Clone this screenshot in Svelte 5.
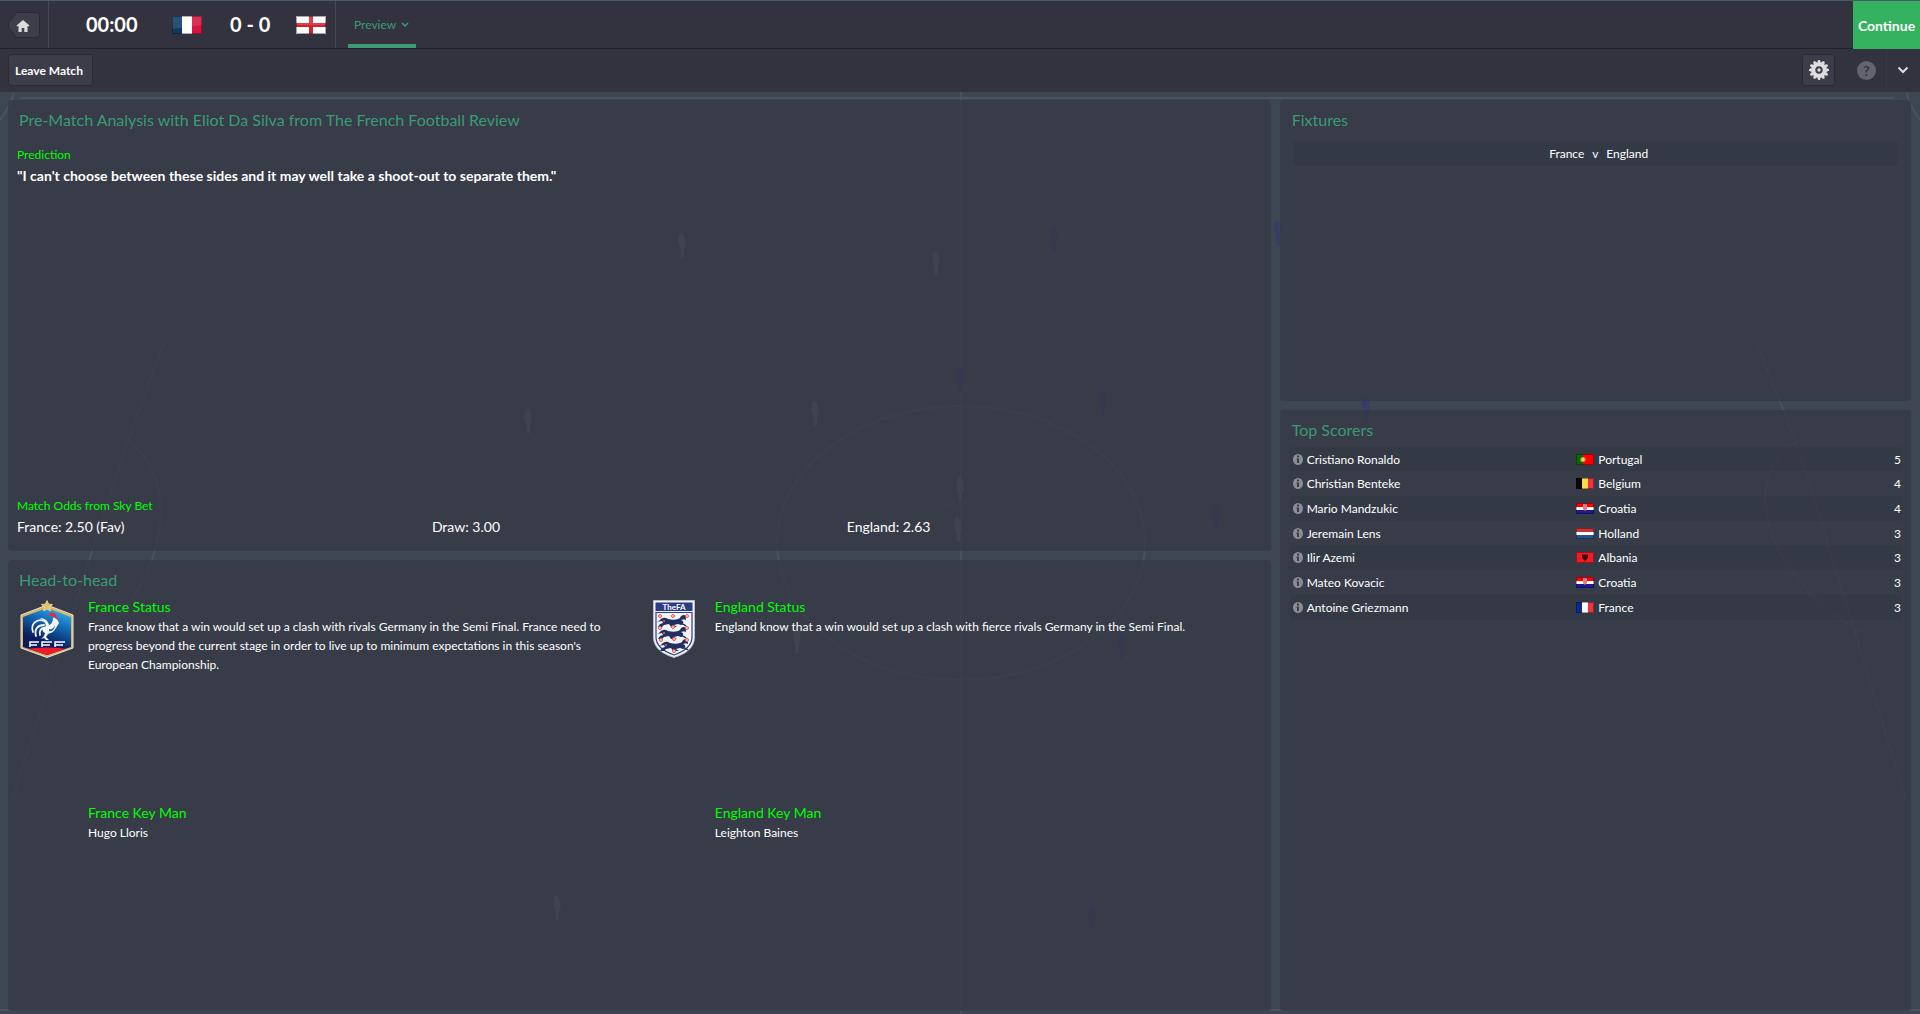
<script>
  const scorers = [
    { name: 'Cristiano Ronaldo', nation: 'Portugal', goals: 5 },
    { name: 'Christian Benteke', nation: 'Belgium', goals: 4 },
    { name: 'Mario Mandzukic', nation: 'Croatia', goals: 4 },
    { name: 'Jeremain Lens', nation: 'Holland', goals: 3 },
    { name: 'Ilir Azemi', nation: 'Albania', goals: 3 },
    { name: 'Mateo Kovacic', nation: 'Croatia', goals: 3 },
    { name: 'Antoine Griezmann', nation: 'France', goals: 3 }
  ];

  const odds = ['France: 2.50 (Fav)', 'Draw: 3.00', 'England: 2.63'];

  const teams = [
    {
      name: 'France',
      status: "France know that a win would set up a clash with rivals Germany in the Semi Final. France need to progress beyond the current stage in order to live up to minimum expectations in this season's European Championship.",
      keyMan: 'Hugo Lloris'
    },
    {
      name: 'England',
      status: 'England know that a win would set up a clash with fierce rivals Germany in the Semi Final.',
      keyMan: 'Leighton Baines'
    }
  ];

  // players standing on the pitch behind the panels
  const players = [
    { x: 682, y: 246, home: false },
    { x: 936, y: 264, home: false },
    { x: 1054, y: 240, home: true },
    { x: 1278, y: 234, home: true },
    { x: 960, y: 380, home: true },
    { x: 815, y: 414, home: false },
    { x: 1103, y: 404, home: true },
    { x: 528, y: 422, home: false },
    { x: 1366, y: 410, home: true },
    { x: 960, y: 490, home: false },
    { x: 958, y: 530, home: false },
    { x: 1216, y: 518, home: true },
    { x: 797, y: 642, home: false },
    { x: 1121, y: 648, home: true },
    { x: 557, y: 909, home: false },
    { x: 1092, y: 918, home: true }
  ];
</script>

{#snippet flag(nation)}
  <svg class="flag" viewBox="0 0 18 11" aria-hidden="true">
    {#if nation === 'Portugal'}
      <path fill="#f00" d="M0 0h18v11H0z" />
      <path fill="#066b00" d="M0 0h7v11H0z" />
      <circle cx="7" cy="5.5" r="2.6" fill="#e8a020" />
      <circle cx="7" cy="5.5" r="1.3" fill="#f6d6d0" />
    {:else if nation === 'Belgium'}
      <path fill="#080808" d="M0 0h6v11H0z" />
      <path fill="#fbdc4c" d="M6 0h6v11H6z" />
      <path fill="#ef3340" d="M12 0h6v11h-6z" />
    {:else if nation === 'Croatia'}
      <path fill="#fff" d="M0 0h18v11H0z" />
      <path fill="#f00" d="M0 0h18v4H0z" />
      <path fill="#1a1a96" d="M0 7h18v4H0z" />
      <path fill="#f27474" d="M7 2h4v4l-2 2-2-2z" />
      <path fill="#6b8fd0" d="M7 1h4v1H7z" />
    {:else if nation === 'Holland'}
      <path fill="#fff" d="M0 0h18v11H0z" />
      <path fill="#c8323c" d="M0 0h18v4H0z" />
      <path fill="#27509b" d="M0 7h18v4H0z" />
    {:else if nation === 'Albania'}
      <path fill="#ee1c25" d="M0 0h18v11H0z" />
      <path fill="#3a0808" d="M6 2l2 1 1-1 1 1 2-1v3l-1 2-2 2-2-2-1-2z" />
    {:else}
      <path fill="#fff" d="M0 0h18v11H0z" />
      <path fill="#0a2a92" d="M0 0h6v11H0z" />
      <path fill="#ef3340" d="M12 0h6v11h-6z" />
    {/if}
    <path fill="none" stroke="#000" stroke-opacity=".35" d="M.5.5h17v10H.5z" />
  </svg>
{/snippet}

<div class="screen">
  <svg class="pitch" viewBox="0 0 1920 1014" preserveAspectRatio="none" aria-hidden="true">
    <path d="M961 92V1014M20 98H1894M0 1010H1920" />
    <ellipse cx="961" cy="543" rx="184" ry="137" />
    <path d="M14 92C12 102 6 112 0 120M164 342L124 452L12 800M124 440C172 462 180 560 104 632M1907 92C1908 102 1914 112 1920 120M1756 342L1800 452L1906 800M1800 440C1748 462 1744 560 1860 632" />
    {#each players as p}
      <path class={p.home ? 'home' : 'away'} d="M{p.x} {p.y - 14}l3 5l1 8l-2 3l0 9l-3 1l-1 -10l-2 -6l1 -8z" />
    {/each}
    <text x="961" y="508">Rooney</text>
  </svg>

  <header class="topbar">
    <button class="home-btn" aria-label="Home">
      <svg viewBox="0 0 32 26" aria-hidden="true">
        <path fill="#3d3e49" stroke="#282a34" d="M8.500.5h20a3 3 0 0 1 3 3v19a3 3 0 0 1-3 3h-20L.5 15.500v-5z" />
        <path fill="#dcdcdc" d="M15 8l6.500 5.500-1 1-1-.5v6h-3.200v-4h-2.600v4H10.500v-6l-1 .5-1-1z" />
      </svg>
    </button>
    <div class="scoreboard">
      <span class="clock">00:00</span>
      <svg class="big-flag" viewBox="0 0 30 18" aria-label="France" role="img">
        <path fill="#fff" d="M0 0h30v18H0z" />
        <path fill="#0c3a63" d="M0 0h10v18H0z" />
        <path fill="#da1240" d="M20 0h10v18H20z" />
        <path fill="#fff" fill-opacity=".12" d="M0 0h30v9L0 13z" />
        <path fill="none" stroke="#000" stroke-opacity=".3" d="M.5.5h29v17H.5z" />
      </svg>
      <span class="score">0 - 0</span>
      <svg class="big-flag" viewBox="0 0 30 18" aria-label="England" role="img">
        <path fill="#fff" d="M0 0h30v18H0z" />
        <path fill="#d2202f" d="M13 0h4v7h13v4H17v7h-4v-7H0V7h13z" />
        <path fill="#fff" fill-opacity=".15" d="M0 0h30v9H0z" />
        <path fill="none" stroke="#000" stroke-opacity=".35" d="M.5.5h29v17H.5z" />
      </svg>
    </div>
    <button class="tab">
      Preview
      <svg width="8" height="6" viewBox="0 0 8 6" aria-hidden="true"><path d="M1 1l3 3 3-3" /></svg>
    </button>
    <button class="continue">Continue</button>
  </header>

  <div class="toolbar">
    <button class="tool">Leave Match</button>
    <button class="tool icon gear" aria-label="Settings">
      <svg width="20" height="20" viewBox="-10 -10 20 20" aria-hidden="true">
        {#each [0, 30, 60, 90, 120, 150] as angle}
          <path fill="#dedede" transform="rotate({angle})" d="M-1.700-8L-.8-10H.8L1.700-8V8L.8 10H-.8L-1.700 8z" />
        {/each}
        <circle r="7.500" fill="#dedede" />
        <circle r="2.700" fill="none" stroke="#3c3d48" stroke-width="2" />
      </svg>
    </button>
    <button class="help" aria-label="Help">?</button>
    <button class="more" aria-label="More">
      <svg width="12" height="8" viewBox="0 0 12 8" aria-hidden="true"><path d="M1.500 1.500L6 6l4.500-4.500" /></svg>
    </button>
  </div>

  <main>
    <div class="column even">
      <section class="panel">
        <h2>Pre-Match Analysis with Eliot Da Silva from The French Football Review</h2>
        <div class="analysis">
          <h3>Prediction</h3>
          <p class="quote">"I can't choose between these sides and it may well take a shoot-out to separate them."</p>
          <div class="odds">
            <h3>Match Odds from Sky Bet</h3>
            {#each odds as odd}
              <span>{odd}</span>
            {/each}
          </div>
        </div>
      </section>

      <section class="panel">
        <h2>Head-to-head</h2>
        <div class="teams">
          {#each teams as team}
            <article class="team">
              {#if team.name === 'France'}
                <svg class="crest" width="54" height="58" viewBox="0 0 54 58" role="img" aria-label="France crest">
                  <defs>
                    <linearGradient id="fff-blue" x1="0.800" y1="0" x2="0.400" y2="1">
                      <stop offset="0" stop-color="#35b4ee" />
                      <stop offset=".35" stop-color="#1268b4" />
                      <stop offset=".75" stop-color="#0b1c5c" />
                    </linearGradient>
                    <clipPath id="fff-shield"><path d="M27 8L51 17V47L27 55L3 47V17z" /></clipPath>
                  </defs>
                  <path fill="#d9b566" stroke="#e9e3d2" d="M27 5L53 15V48L27 57.500L1 48V15z" />
                  <path fill="url(#fff-blue)" d="M27 8L51 17V47L27 55L3 47V17z" />
                  <path clip-path="url(#fff-shield)" fill="#ec1c2c" d="M0 50Q27 45 54 50V58H0z" />
                  <path fill="#e8bf62" stroke="#f0e3bd" stroke-width=".7" d="M27 .5l1.600 3.600 4 .4-3 2.600.9 3.900-3.500-2-3.500 2 .9-3.900-3-2.600 4-.4z" />
                  <path fill="none" stroke="#f4f6fa" stroke-width="1.800" stroke-linecap="round" d="M13 32c-3-8 4-14 11-11M16 36c-2-7 2-11 8-11M20 35c-1-4 1-7 4-7" />
                  <path fill="#f4f6fa" d="M20 18c5 0 8 3 9 7 3-1 4-4 4-7l3-1 2 4 1 2-3 5c-2 4-5 5-8 6l-2 3 3 3h-3l-2-2-3 1 3-3 1-3c-4-2-3-6 1-7-1-4-3-6-6-8z" />
                  <path fill="#1768ae" d="M29 29c3 1 5-1 6-4 0 4-3 7-6 6z" />
                  <path fill="#e8283c" d="M29 16c0-3 2-4 4-3 2 0 3 1 3 3l2 4-2-1-3-3z" />
                  <path fill="none" stroke="#fff" stroke-width="1.500" d="M10 47v-5h9M10 45h7M22 47v-5h10M22 45h8M35 47v-5h10M35 45h8" />
                </svg>
              {:else}
                <svg class="crest" width="42" height="58" viewBox="0 0 42 58" role="img" aria-label="England crest">
                  <path fill="#f2f3f7" stroke="#b9bcc8" d="M.5.5h41V37c0 11-9 17-20.500 20.500C9.500 54 .5 48 .5 37z" />
                  <path fill="#2b3c86" d="M2.500 2.500h37v8.500h-37z" />
                  <path fill="none" stroke="#2b3c86" stroke-width="1.200" d="M3 12.500h36V37c0 9-8 14.500-18 18C11 51.500 3 46 3 37z" />
                  <text x="21" y="9.500">TheFA</text>
                  {#each [15, 27, 39] as y, i}
                    <g transform="translate({i === 2 ? 2 : 0} {y})">
                      <path fill="#22305f" d="M6 6c3-4 6-4 9-2 5 1 9 1 12-1 1-3 4-4 6-2l-1 3-4 1c3 1 3 4 0 5l-3-1-4 1 3 2h-6l-2-3-5 1-2 2H5l2-3 3-1-1-2-5 1z" />
                      <path fill="none" stroke="#22305f" stroke-width="1.300" d="M28 2c4-1 5 1 4 3M26 8c3 1 5 1 7 3" />
                      <circle cx="11" cy="6" r="1" fill="#e8606a" />
                    </g>
                  {/each}
                  {#each [[7, 16], [20, 16], [34, 16], [7, 28], [20, 27], [34, 28], [8, 40], [21, 39], [34, 40], [21, 51]] as [cx, cy]}
                    <circle {cx} {cy} r="1.500" fill="#fbd5d3" stroke="#e4584f" />
                  {/each}
                </svg>
              {/if}
              <div class="info">
                <h3>{team.name} Status</h3>
                <p>{team.status}</p>
              </div>
              <div class="info">
                <h3>{team.name} Key Man</h3>
                <p>{team.keyMan}</p>
              </div>
            </article>
          {/each}
        </div>
      </section>
    </div>

    <div class="column side">
      <section class="panel">
        <h2>Fixtures</h2>
        <div class="fixture">
          <span>France</span>
          <span>v</span>
          <span>England</span>
        </div>
      </section>

      <section class="panel">
        <h2>Top Scorers</h2>
        <table>
          <tbody>
            {#each scorers as scorer}
              <tr>
                <td>
                  <div class="cell">
                    <svg class="info-icon" width="10" height="11" viewBox="0 0 10 11" aria-hidden="true">
                      <ellipse cx="5" cy="5.500" rx="5" ry="5.500" fill="#8b8d93" />
                      <path fill="#3a3d48" d="M4 1.500h2v2H4zM3.500 4.500H6v4.500H4V5.500h-.5z" />
                    </svg>
                    {scorer.name}
                  </div>
                </td>
                <td class="nation">
                  <div class="cell">
                    {@render flag(scorer.nation)}
                    {scorer.nation}
                  </div>
                </td>
                <td class="goals">{scorer.goals}</td>
              </tr>
            {/each}
          </tbody>
        </table>
      </section>
    </div>
  </main>
</div>

<style>
  :global(body) {
    margin: 0;
    background: #3d4651;
  }

  .screen {
    position: relative;
    display: flex;
    flex-direction: column;
    min-height: 100vh;
    box-sizing: border-box;
    font-family: Lato, "Liberation Sans", sans-serif;
    font-size: 12px;
    line-height: 19px;
    color: #fff;
  }

  h2, h3, p {
    margin: 0;
    font-weight: 400;
  }

  button {
    padding: 0;
    border: 0;
    background: none;
    color: inherit;
    font: inherit;
    cursor: pointer;
  }

  svg {
    display: block;
    flex: none;
  }

  /* pitch */
  .pitch {
    position: absolute;
    inset: 0;
    width: 100%;
    height: 100%;
    fill: none;
    stroke: #4a5160;
    stroke-width: 2;
  }

  .pitch .away {
    fill: #565a70;
    stroke: none;
  }

  .pitch .home {
    fill: #383c66;
    stroke: none;
  }

  .pitch text {
    fill: #4c4e60;
    stroke: none;
    font-size: 12px;
    text-anchor: middle;
  }

  /* bars */
  .topbar {
    position: relative;
    display: flex;
    height: 49px;
    box-sizing: border-box;
    border-top: 1px solid #4b5a68;
    border-bottom: 1px solid #1f212b;
    background: #32333f;
  }

  .home-btn {
    width: 49px;
    padding: 0 8px;
    border-right: 1px solid #454752;
  }

  .home-btn svg {
    width: 32px;
    height: 26px;
  }

  .scoreboard {
    display: grid;
    grid-template-columns: 86px 58px 66px 30px;
    align-items: center;
    padding: 0 9px 0 37px;
    border-right: 1px solid #454752;
    font-size: 20px;
    font-weight: 700;
  }

  .big-flag {
    width: 30px;
    height: 18px;
  }

  .tab {
    display: flex;
    align-items: center;
    gap: 5px;
    margin-left: 12px;
    padding: 4px 7px 0 6px;
    border-bottom: 4px solid #3c9a74;
    color: #3c9a74;
  }

  .tab svg {
    fill: none;
    stroke: #3c9a74;
    stroke-width: 1.5;
  }

  .continue {
    width: 67px;
    margin-left: auto;
    margin-bottom: -1px;
    background: #35b25f;
    font-size: 14px;
    font-weight: 700;
  }

  .toolbar {
    position: relative;
    display: flex;
    align-items: center;
    height: 43px;
    box-sizing: border-box;
    padding: 0 0 0 8px;
    border-bottom: 1px solid #2c3a33;
    background: #32333f;
  }

  .tool {
    height: 32px;
    padding: 0 9px 0 6px;
    border: 1px solid #2a2b36;
    border-radius: 3px;
    background: #3c3d48;
    font-weight: 700;
  }

  .icon {
    display: grid;
    place-items: center;
    width: 33px;
    padding: 0;
  }

  .gear {
    margin-left: auto;
    margin-right: 22px;
  }

  .help {
    width: 19px;
    height: 19px;
    border-radius: 50%;
    background: #63646d;
    color: #363743;
    font-size: 14px;
    font-weight: 700;
    line-height: 19px;
  }

  .more {
    align-self: stretch;
    width: 34px;
    margin-left: 10px;
    padding-left: 10px;
    border-left: 1px solid #383945;
  }

  .more svg {
    fill: none;
    stroke: #dedede;
    stroke-width: 2;
  }

  /* panels */
  main {
    position: relative;
    flex: 1;
    display: grid;
    grid-template-columns: 2fr 1fr;
    gap: 9px;
    padding: 8px 9px 3px 8px;
  }

  .column {
    display: grid;
    gap: 9px;
  }

  .even {
    grid-template-rows: 1fr 1fr;
  }

  .side {
    grid-template-rows: 1fr 2fr;
  }

  .panel {
    display: flex;
    flex-direction: column;
    padding-top: 10px;
    border-radius: 4px;
    background: rgba(53, 56, 68, 0.7);
  }

  h2 {
    padding-left: 11px;
    color: #3c9a74;
    font-size: 16px;
    line-height: 20px;
  }

  h3 {
    color: #0f0;
    font-size: 12px;
  }

  .analysis {
    flex: 1;
    display: flex;
    flex-direction: column;
    padding: 14px 9px;
    line-height: 21px;
  }

  .quote {
    font-size: 14px;
    font-weight: 700;
  }

  .odds {
    display: grid;
    grid-template-columns: repeat(3, 1fr);
    margin-top: auto;
    font-size: 14px;
  }

  .odds h3 {
    grid-column: 1 / -1;
  }

  .teams {
    flex: 1;
    display: grid;
    grid-template-columns: 1fr 1fr;
    padding: 6px 0 4px 9px;
  }

  .team {
    display: grid;
    grid-template-columns: 60px 1fr;
    grid-template-rows: 1fr 1fr;
    column-gap: 11px;
    padding-right: 20px;
  }

  .crest {
    justify-self: center;
    margin-top: 4px;
  }

  .crest text {
    fill: #fff;
    font-size: 8px;
    font-weight: 700;
    text-anchor: middle;
  }

  .info {
    grid-column: 2;
  }

  .info h3 {
    font-size: 14px;
    line-height: 21px;
  }

  .side h2 {
    padding-left: 12px;
  }

  .fixture {
    display: grid;
    grid-template-columns: 1fr 12px 1fr;
    column-gap: 5px;
    align-items: center;
    height: 24px;
    margin: 11px 13px 0;
    background: rgba(50, 56, 66, 0.5);
    text-align: center;
  }

  .fixture span:first-child {
    text-align: right;
  }

  .fixture span:last-child {
    text-align: left;
  }

  table {
    height: 173px;
    margin: 7px 9px 0 10px;
    border-collapse: collapse;
    table-layout: fixed;
  }

  tr:nth-child(odd) {
    background: rgba(50, 56, 66, 0.5);
  }

  td {
    width: 46%;
    padding: 0 0 0 3px;
  }

  .cell {
    display: flex;
    align-items: center;
    gap: 4px;
  }

  td.nation {
    padding-left: 5px;
  }

  .flag {
    width: 18px;
    height: 11px;
  }

  td.goals {
    width: 8%;
    padding-right: 1px;
    text-align: right;
  }
</style>
